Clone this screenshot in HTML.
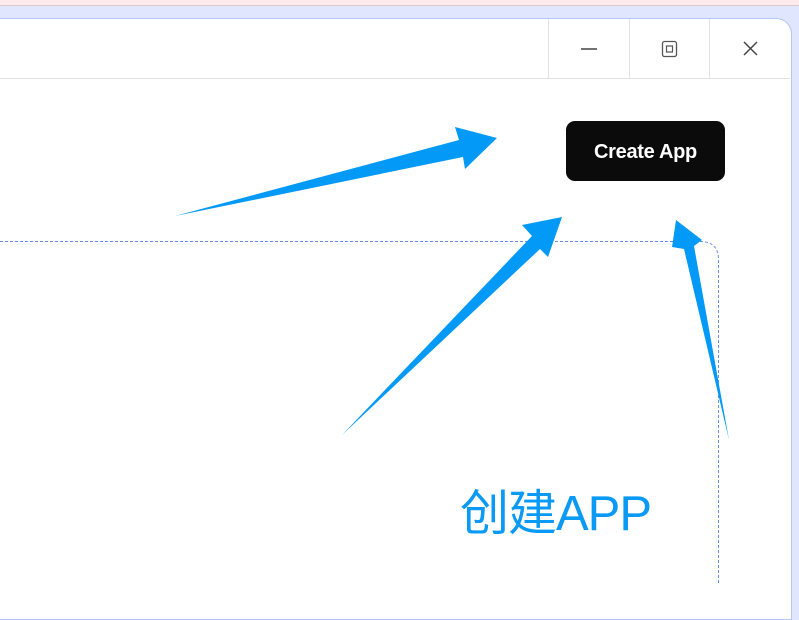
<!DOCTYPE html>
<html><head><meta charset="utf-8"><style>
html,body{margin:0;padding:0;width:799px;height:583px;overflow:hidden;background:#dfe6fd;font-family:"Liberation Sans","Noto Sans CJK SC",sans-serif}
.top{position:absolute;left:0;top:0;width:799px;height:5px;background:#fdeaea;border-bottom:1px solid #d8c8d0}
.win{position:absolute;left:-10px;top:18px;width:800px;height:600px;background:#fff;border:1px solid #b5c8f5;border-top-right-radius:16px}
.bar{position:absolute;left:0;top:78px;width:790px;height:1px;background:#e2e2e2}
.sep{position:absolute;top:19px;width:1px;height:59px;background:#e2e2e2}
.btn{position:absolute;left:566px;top:121px;width:159px;height:60px;background:#0b0b0b;border-radius:9px;color:#fff;font-size:20px;font-weight:bold;text-align:center;line-height:62px;letter-spacing:-0.3px}
.cn{position:absolute;left:460px;top:482px;font-size:49px;color:#0a9af5;font-family:"Liberation Sans","Noto Sans CJK SC",sans-serif;line-height:64px;letter-spacing:-1px}
</style></head><body>
<div class="top"></div>
<div class="win"></div>
<div class="bar"></div>
<div class="sep" style="left:548px"></div>
<div class="sep" style="left:629px"></div>
<div class="sep" style="left:709px"></div>
<svg style="position:absolute;left:0;top:0" width="799" height="583">
<line x1="581" y1="49" x2="597" y2="49" stroke="#444" stroke-width="1.5"/>
<rect x="662.5" y="41.5" width="14" height="15" rx="2" fill="none" stroke="#555" stroke-width="1.3"/>
<rect x="666.5" y="46" width="6" height="6" fill="none" stroke="#555" stroke-width="1.2"/>
<path d="M744 42 L757 55 M757 42 L744 55" stroke="#444" stroke-width="1.5"/>
<path d="M0 241.5 H700 Q718.5 241.5 718.5 260 V583" fill="none" stroke="#6a8ce0" stroke-width="1" stroke-dasharray="3 2"/>
<polygon points="175,216 459,140 455,127 497,138 465,169 463,157" fill="#0399f7"/>
<polygon points="342,435 532,236 522,225 562,217 548,257 540,249" fill="#0399f7"/>
<polygon points="729,440 684,249 672,247 676,220 702,240 694,246" fill="#0399f7"/>
</svg>
<div class="btn">Create App</div>
<div class="cn">创建APP</div>
</body></html>
